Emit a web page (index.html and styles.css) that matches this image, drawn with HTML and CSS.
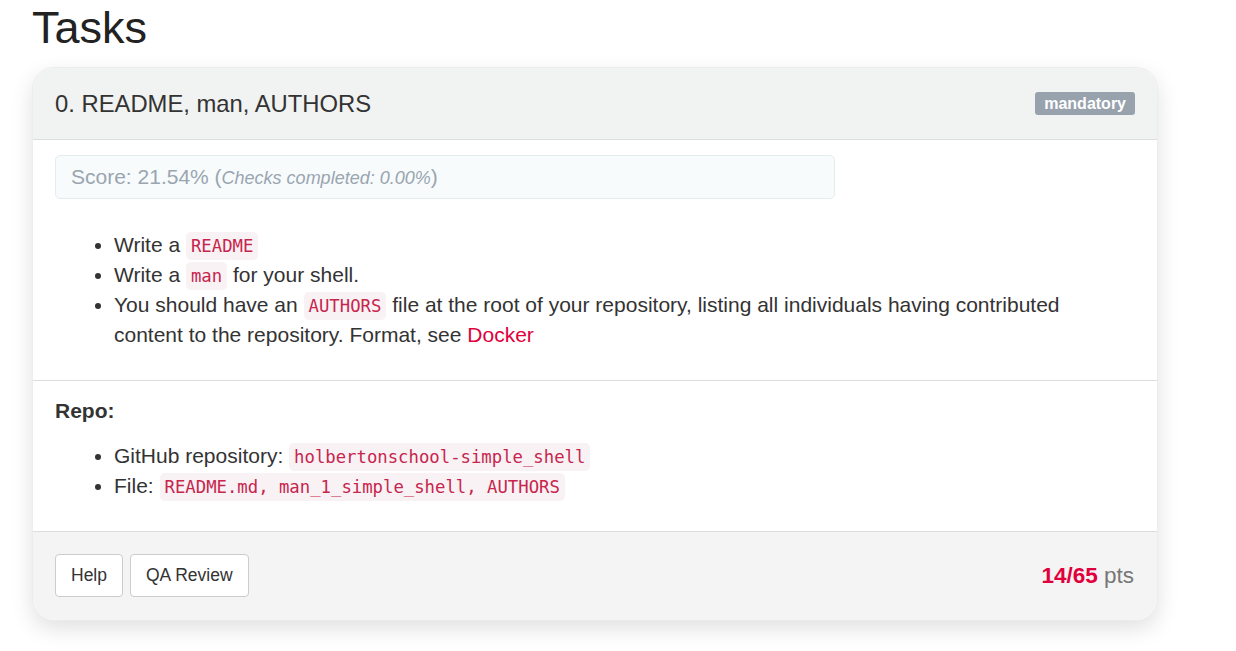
FILE: index.html
```html
<!DOCTYPE html>
<html>
<head>
<meta charset="utf-8">
<link rel="stylesheet" href="styles.css">
</head>
<body>
<div class="page">
  <h1 class="title">Tasks</h1>
  <div class="card">
    <div class="card-head">
      <h3 class="card-title">0. README, man, AUTHORS</h3>
      <span class="badge">mandatory</span>
    </div>
    <div class="card-body">
      <div class="score">Score: 21.54% (<em>Checks completed: 0.00%</em>)</div>
      <ul class="list first">
        <li>Write a <code>README</code></li>
        <li>Write a <code>man</code> for your shell.</li>
        <li>You should have an <code>AUTHORS</code> file at the root of your repository, listing all individuals having contributed content to the repository. Format, see <a href="#">Docker</a></li>
      </ul>
    </div>
    <div class="card-body repo">
      <p class="repo-label">Repo:</p>
      <ul class="list">
        <li>GitHub repository: <code>holbertonschool-simple_shell</code></li>
        <li>File: <code>README.md, man_1_simple_shell, AUTHORS</code></li>
      </ul>
    </div>
    <div class="card-foot">
      <div class="buttons">
        <button class="btn">Help</button>
        <button class="btn">QA Review</button>
      </div>
      <div class="pts"><strong>14/65</strong> pts</div>
    </div>
  </div>
</div>
</body>
</html>
```

FILE: styles.css
```css
* { box-sizing: border-box; }
html, body { margin: 0; padding: 0; background: #fff; }
body {
  font-family: "Liberation Sans", Arial, sans-serif;
  font-size: 21px;
  line-height: 30px;
  color: #333;
}
.page { padding: 0 0 30px 32px; }
.title {
  margin: 0;
  padding-top: 1px;
  font-size: 45px;
  font-weight: 400;
  line-height: 54px;
  color: #222;
}
.card {
  width: 1126px;
  margin-top: 12px;
  border: 1px solid #ececec;
  border-radius: 22px;
  background: #fff;
  box-shadow: 0 8px 22px rgba(0,0,0,0.12);
  overflow: hidden;
}
.card-head {
  display: flex;
  align-items: center;
  justify-content: space-between;
  height: 72px;
  padding: 0 22px;
  background: #f1f2f2;
  border-bottom: 1px solid #ddd;
}
.card-title {
  margin: 0;
  font-size: 23.8px;
  font-weight: 400;
  color: #333;
}
.badge {
  display: inline-block;
  background: #98a2ad;
  color: #fff;
  font-weight: 700;
  font-size: 16px;
  line-height: 23px;
  padding: 0 9px;
  border-radius: 3px;
}
.card-body {
  padding: 15px 22px 30px;
  border-bottom: 1px solid #ddd;
}
.score {
  width: 780px;
  height: 44px;
  line-height: 42px;
  padding: 0 15px;
  border: 1px solid #e5ecee;
  border-radius: 5px;
  background: #f7fbfc;
  color: #9aa5b0;
  font-size: 21px;
}
.score em { font-size: 18px; }
.list {
  margin: 0;
  padding-left: 59px;
  padding-right: 40px;
}
.list.first { margin-top: 31px; }
.list li { line-height: 30px; }
code {
  font-family: "DejaVu Sans Mono", "Liberation Mono", monospace;
  font-size: 17.3px;
  line-height: 1;
  color: #c7254e;
  background: #f9f2f4;
  padding: 4px 5px;
  border-radius: 5px;
}
a { color: #e0003c; text-decoration: none; }
.repo-label {
  margin: 0 0 15px;
  font-weight: 700;
  font-size: 21px;
}
.card-foot {
  display: flex;
  align-items: center;
  justify-content: space-between;
  padding: 22px 23px 23px 22px;
  background: #f4f4f4;
}
.buttons { display: flex; gap: 7px; }
.btn {
  font-family: "Liberation Sans", Arial, sans-serif;
  font-size: 17.5px;
  line-height: 27px;
  padding: 7px 15px;
  color: #333;
  background: #fff;
  border: 1px solid #ccc;
  border-radius: 4px;
}
.pts {
  font-size: 22.5px;
  color: #777;
}
.pts strong { color: #e0003c; }
```
